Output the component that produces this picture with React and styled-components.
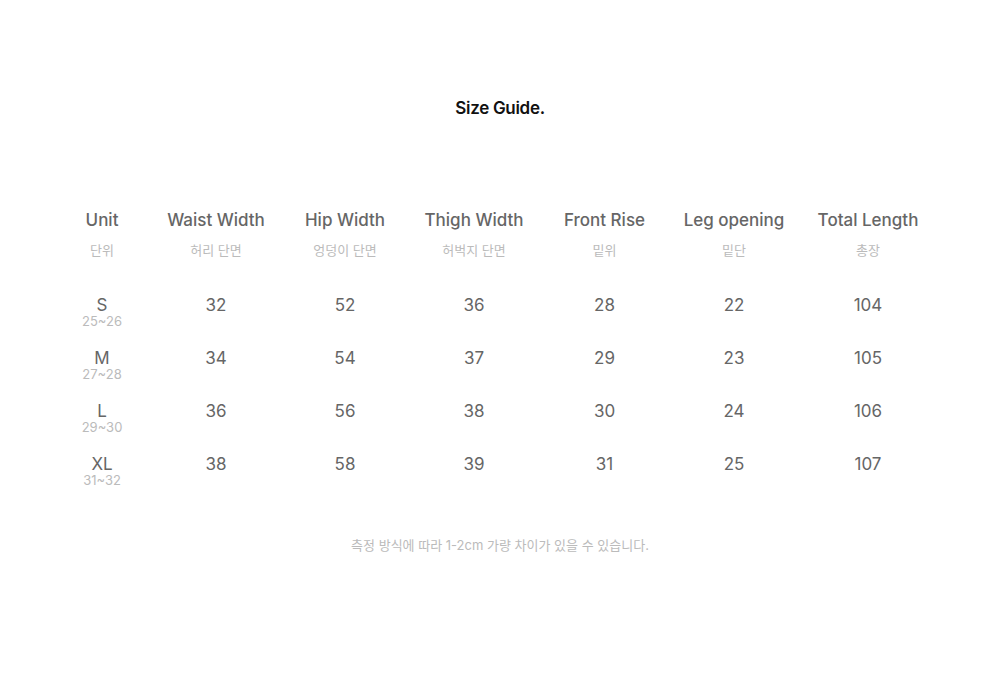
import React from 'react';
import styled, { createGlobalStyle } from 'styled-components';

const columns = [
  { en: 'Unit', ko: '단위' },
  { en: 'Waist Width', ko: '허리 단면' },
  { en: 'Hip Width', ko: '엉덩이 단면' },
  { en: 'Thigh Width', ko: '허벅지 단면' },
  { en: 'Front Rise', ko: '밑위' },
  { en: 'Leg opening', ko: '밑단' },
  { en: 'Total Length', ko: '총장' },
];

const rows = [
  { size: 'S', range: '25~26', values: [32, 52, 36, 28, 22, 104] },
  { size: 'M', range: '27~28', values: [34, 54, 37, 29, 23, 105] },
  { size: 'L', range: '29~30', values: [36, 56, 38, 30, 24, 106] },
  { size: 'XL', range: '31~32', values: [38, 58, 39, 31, 25, 107] },
];

function App() {
  return (
    <>
      <GlobalStyle />
      <Page>
        <Title>Size Guide.</Title>
        <Table>
          {columns.map((c) => (
            <HeadCell key={c.en}>
              <HeadEn>{c.en}</HeadEn>
              <HeadKo>{c.ko}</HeadKo>
            </HeadCell>
          ))}
          {rows.map((r) => (
            <React.Fragment key={r.size}>
              <SizeCell>
                <SizeName>{r.size}</SizeName>
                <SizeRange>{r.range}</SizeRange>
              </SizeCell>
              {r.values.map((v, i) => (
                <ValueCell key={i}>{v}</ValueCell>
              ))}
            </React.Fragment>
          ))}
        </Table>
        <Note>측정 방식에 따라 1-2cm 가량 차이가 있을 수 있습니다.</Note>
      </Page>
    </>
  );
}

export default App;

const GlobalStyle = createGlobalStyle`
  body {
    margin: 0;
    background: #fff;
    font-family: Inter, "Noto Sans CJK KR", sans-serif;
  }
`;

const Page = styled.div`
  width: 1000px;
  height: 683px;
  display: flex;
  flex-direction: column;
  align-items: flex-start;
  padding-top: 96px;
  box-sizing: border-box;
`;

const Title = styled.h2`
  align-self: center;
  margin: 0;
  font-size: 17px;
  font-weight: 600;
  line-height: 24px;
  color: #111;
  letter-spacing: -0.3px;
`;

const Table = styled.div`
  display: grid;
  grid-template-columns: 104px 124px 134px 124px 137px 122px 146px;
  margin: 88px 0 0 50px;
`;

const HeadCell = styled.div`
  display: flex;
  flex-direction: column;
  align-items: center;
  height: 87px;
`;

const HeadEn = styled.div`
  font-size: 17px;
  font-weight: 500;
  line-height: 24px;
  color: #666;
`;

const HeadKo = styled.div`
  margin-top: 10px;
  font-size: 13px;
  line-height: 16px;
  color: #bbb;
`;

const SizeCell = styled.div`
  display: flex;
  flex-direction: column;
  align-items: center;
  height: 53px;
`;

const SizeName = styled.div`
  font-size: 17px;
  line-height: 20px;
  color: #666;
`;

const SizeRange = styled.div`
  margin-top: -1px;
  font-size: 13px;
  line-height: 14px;
  color: #bbb;
`;

const ValueCell = styled.div`
  text-align: center;
  font-size: 17px;
  line-height: 20px;
  color: #666;
  height: 53px;
`;

const Note = styled.p`
  align-self: center;
  margin: 29px 0 0;
  font-size: 13px;
  line-height: 18px;
  color: #bbb;
`;
